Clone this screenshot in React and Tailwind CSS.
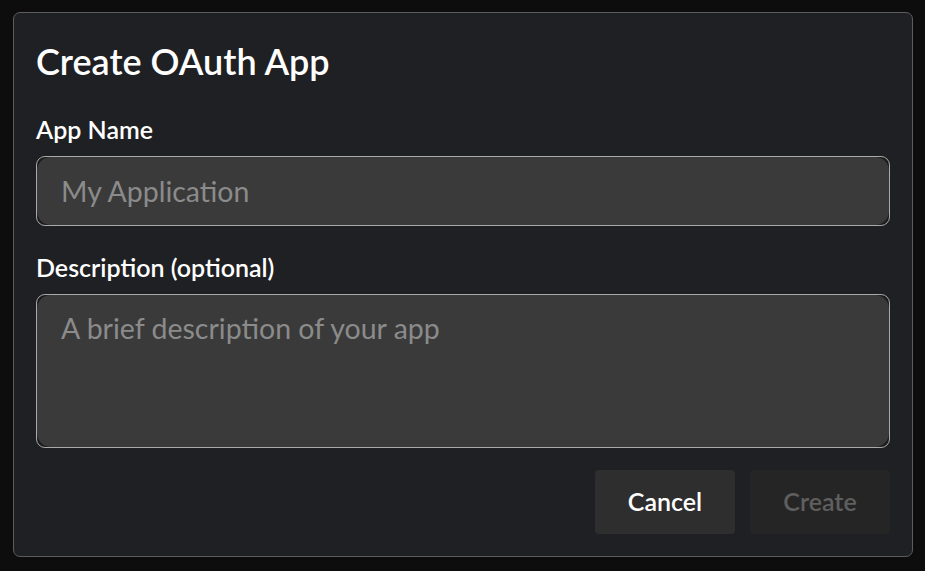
import React from 'react';

const font = { fontFamily: 'Lato, "Open Sans", sans-serif' };

function Field({ label, placeholder, multiline }) {
  return (
    <div className="flex flex-col">
      <label className="text-[25px] font-semibold leading-[30px] text-white">{label}</label>
      <div className="mt-[12px] rounded-[9px] border border-[#a9a9a9] bg-[#1c1c1c]">
        {multiline ? (
          <textarea
            rows={4}
            placeholder={placeholder}
            className="block h-[152px] w-full resize-none rounded-[14px] bg-[#3a3a3a] px-[24px] py-[16px] text-[28.5px] leading-[34px] text-white outline-none placeholder:text-[#8b8b8b]"
            style={font}
          />
        ) : (
          <input
            placeholder={placeholder}
            className="block h-[68px] w-full rounded-[14px] bg-[#3a3a3a] px-[24px] text-[28.5px] text-white outline-none placeholder:text-[#8b8b8b]"
            style={font}
          />
        )}
      </div>
    </div>
  );
}

export default function App() {
  return (
    <div className="h-[571px] w-[925px] bg-[#0d0d0d] pl-[13px] pt-[12px]" style={font}>
      <div className="flex w-[900px] flex-col rounded-[7px] border border-[#5c5c5c] bg-[#1f2023] p-[22px]">
        <h1 className="mt-[6px] text-[36px] font-semibold leading-[41px] text-white">Create OAuth App</h1>
        <div className="mt-[32px] flex flex-col gap-[26px]">
          <Field label="App Name" placeholder="My Application" />
          <Field label="Description (optional)" placeholder="A brief description of your app" multiline />
        </div>
        <div className="mt-[22px] flex justify-end gap-[15px]">
          <button className="h-[64px] w-[140px] rounded-[4px] bg-[#2e2e2e] text-[25px] font-semibold text-white">Cancel</button>
          <button disabled className="h-[64px] w-[140px] rounded-[4px] bg-[#252525] text-[25px] font-semibold text-[#5f5f5f]">Create</button>
        </div>
      </div>
    </div>
  );
}
